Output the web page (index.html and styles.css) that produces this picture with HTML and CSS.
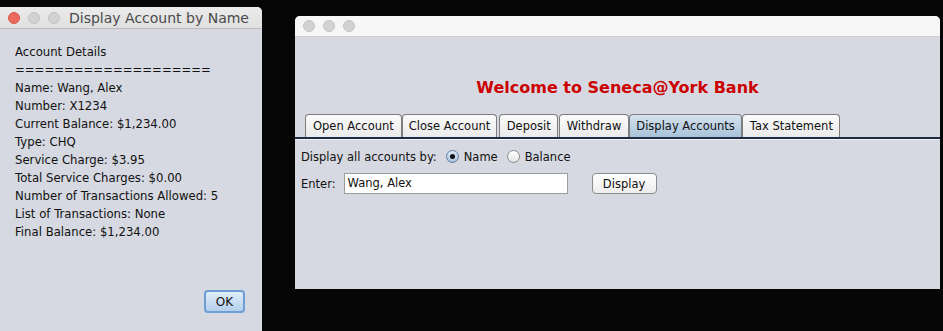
FILE: index.html
```html
<!DOCTYPE html>
<html>
	<head>
		<title>Seneca@York Bank</title>
		<link rel="stylesheet" href="styles.css">
	</head>
	<body>
		<div class="desktop">
			<div class="window details">
				<div class="titlebar">
					<span class="light red"></span>
					<span class="light"></span>
					<span class="light"></span>
					<span class="title">Display Account by Name</span>
				</div>
				<div class="content">
					<ul class="lines">
						<li>Account Details</li>
						<li>====================</li>
						<li>Name: Wang, Alex</li>
						<li>Number: X1234</li>
						<li>Current Balance: $1,234.00</li>
						<li>Type: CHQ</li>
						<li>Service Charge: $3.95</li>
						<li>Total Service Charges: $0.00</li>
						<li>Number of Transactions Allowed: 5</li>
						<li>List of Transactions: None</li>
						<li>Final Balance: $1,234.00</li>
					</ul>
					<div class="actions">
						<button class="btn ok">OK</button>
					</div>
				</div>
			</div>

			<div class="window bank">
				<div class="titlebar plain">
					<span class="light"></span>
					<span class="light"></span>
					<span class="light"></span>
				</div>
				<div class="content">
					<h1>Welcome to Seneca@York Bank</h1>
					<div class="tabs">
						<span class="tab">Open Account</span>
						<span class="tab">Close Account</span>
						<span class="tab">Deposit</span>
						<span class="tab">Withdraw</span>
						<span class="tab active">Display Accounts</span>
						<span class="tab">Tax Statement</span>
					</div>
					<div class="row">
						Display all accounts by:
						<label class="radio"><span class="dot on"></span>Name</label>
						<label class="radio"><span class="dot"></span>Balance</label>
					</div>
					<div class="row">
						Enter:
						<span class="field">Wang, Alex</span>
						<button class="btn display">Display</button>
					</div>
				</div>
			</div>
		</div>
	</body>
</html>
```

FILE: styles.css
```css
body {
	margin: 0;
	background-color: #060606;
	font-family: "DejaVu Sans", sans-serif;
	font-size: 11px;
	color: #111;
	overflow: hidden;
}
.desktop {
	position: relative;
	width: 943px;
	height: 331px;
}
.window {
	position: absolute;
	display: flex;
	flex-direction: column;
	background-color: #d6d9e1;
	border-radius: 5px 5px 0px 0px;
	overflow: hidden;
}
.details {
	left: 0px;
	top: 7px;
	width: 262px;
	height: 330px;
	border-radius: 0px 5px 0px 0px;
}
.bank {
	left: 295px;
	top: 16px;
	width: 645px;
	height: 273px;
}
.titlebar {
	height: 22px;
	display: flex;
	align-items: center;
	gap: 8px;
	padding-left: 8px;
	background: linear-gradient(#ebebeb, #e0e0e0);
	border-bottom: 1px solid #bdbdbd;
	box-sizing: border-box;
}
.titlebar.plain {
	height: 21px;
	background: #f6f6f6;
	border-bottom: 1px solid #d0d0d0;
	padding-left: 8px;
}
.light {
	width: 12px;
	height: 12px;
	border-radius: 50%;
	background-color: #d2d2d2;
	border: 1px solid #c4c4c4;
	box-sizing: border-box;
}
.light.red {
	background-color: #ec6a5e;
	border-color: #d65a4f;
}
.title {
	margin-left: 1px;
	font-size: 14px;
	color: #4a4a4a;
}
.details .content {
	flex: 1;
	display: flex;
	flex-direction: column;
	padding: 14px 17px 0px 15px;
}
.lines {
	list-style: none;
	margin: 0;
	padding: 0;
	font-size: 11.7px;
}
.lines li {
	line-height: 18px;
	height: 18px;
}
.actions {
	display: flex;
	justify-content: flex-end;
	margin-top: 49px;
}
.btn {
	font-family: "DejaVu Sans", sans-serif;
	font-size: 11px;
	color: #111;
	height: 21px;
	padding: 0px 10px;
	border: 1px solid #8c8c8c;
	border-radius: 4px;
	background: linear-gradient(#ffffff, #ededed);
}
.btn.ok {
	width: 41px;
	height: 23px;
	font-size: 12px;
	padding: 0;
	border: 2px solid #6d9ed4;
	background: linear-gradient(#e2eefa, #b3cfec);
}
.bank .content {
	display: flex;
	flex-direction: column;
	padding: 41px 6px 0px 6px;
}
h1 {
	margin: 0;
	text-align: center;
	font-size: 16px;
	line-height: 20px;
	color: #cc0000;
}
.tabs {
	display: flex;
	gap: 0px;
	margin: 16px 0px 0px -6px;
	padding-left: 10px;
	width: 638px;
	border-bottom: 2px solid #1f2a45;
	box-shadow: 0px 1px 0px #f2f2f2;
}
.tab {
	height: 22px;
	line-height: 23px;
	padding: 0px 6.5px;
	border: 1px solid #7d7d7d;
	border-bottom: none;
	border-radius: 4px 4px 0px 0px;
	background: linear-gradient(#fbfbfb, #eaeaea);
	font-size: 11.5px;
}
.tab:first-child {
	padding: 0px 7px;
}
.tab:nth-child(2) {
	padding: 0px 6px;
}
.tab:nth-child(3) {
	margin-left: 2px;
}
.tab:nth-child(4) {
	margin-left: 1px;
}
.tab.active {
	background: linear-gradient(#d4e2ee, #a9c2d9);
}
.row {
	display: flex;
	align-items: center;
	gap: 8px;
	height: 27px;
	font-size: 11.5px;
}
.tabs + .row {
	margin-top: 4px;
}
.radio {
	display: flex;
	align-items: center;
	gap: 5px;
	margin-left: 1px;
}
.dot {
	width: 13px;
	height: 13px;
	border-radius: 50%;
	border: 1px solid #8a8a8a;
	box-sizing: border-box;
	background: linear-gradient(#ffffff, #e4e4e4);
	display: flex;
	align-items: center;
	justify-content: center;
}
.dot.on {
	border-color: #5f7ea0;
	background: linear-gradient(#dce8f4, #a8c2dc);
}
.dot.on::after {
	content: "";
	width: 5px;
	height: 5px;
	border-radius: 50%;
	background-color: #111;
}
.field {
	width: 224px;
	height: 21px;
	line-height: 19px;
	box-sizing: border-box;
	padding-left: 3px;
	border: 1px solid #9c9c9c;
	background-color: #fff;
}
.btn.display {
	margin-left: 16px;
	width: 65px;
	padding: 0;
	font-size: 11.5px;
}
```
